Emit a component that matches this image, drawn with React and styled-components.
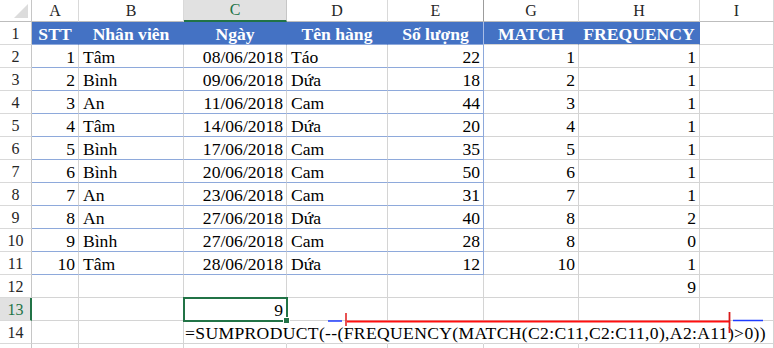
import React from "react";
import styled, { createGlobalStyle, css } from "styled-components";

const GlobalStyle = createGlobalStyle`
  html, body {
    margin: 0;
    padding: 0;
    background: #ffffff;
  }

  body {
    overflow: hidden;
  }
`;

const serif = `"Liberation Serif", "Times New Roman", "DejaVu Serif", serif`;

const columns = [
  { key: "A", width: 47 },
  { key: "B", width: 105 },
  { key: "C", width: 103 },
  { key: "D", width: 101 },
  { key: "E", width: 96 },
  { key: "G", width: 95 },
  { key: "H", width: 121 },
  { key: "I", width: 74 },
];

const headers = ["STT", "Nhân viên", "Ngày", "Tên hàng", "Số lượng", "MATCH", "FREQUENCY"];

const rows = [
  [1, "Tâm", "08/06/2018", "Táo", 22, 1, 1],
  [2, "Bình", "09/06/2018", "Dứa", 18, 2, 1],
  [3, "An", "11/06/2018", "Cam", 44, 3, 1],
  [4, "Tâm", "14/06/2018", "Dứa", 20, 4, 1],
  [5, "Bình", "17/06/2018", "Cam", 35, 5, 1],
  [6, "Bình", "20/06/2018", "Cam", 50, 6, 1],
  [7, "An", "23/06/2018", "Cam", 31, 7, 1],
  [8, "An", "27/06/2018", "Dứa", 40, 8, 2],
  [9, "Bình", "27/06/2018", "Cam", 28, 8, 0],
  [10, "Tâm", "28/06/2018", "Dứa", 12, 10, 1],
];

// column index -> alignment of the data in it
const alignFor = ["right", "left", "right", "left", "right", "right", "right", "left"];

const FORMULA = "=SUMPRODUCT(--(FREQUENCY(MATCH(C2:C11,C2:C11,0),A2:A11)>0))";

const Wrapper = styled.div`
  position: relative;
  width: 774px;
  height: 348px;
  overflow: hidden;
  font-family: ${serif};
`;

const Sheet = styled.div`
  display: grid;
  grid-template-columns: 32px ${columns.map((c) => `${c.width}px`).join(" ")};
  grid-template-rows: 22px repeat(15, 23px);
  font-family: ${serif};
`;

const Corner = styled.div`
  position: relative;
  box-sizing: border-box;
  border-right: 1px solid #c6c6c6;
  border-bottom: 1px solid #bdbdbd;

  &::after {
    content: "";
    position: absolute;
    right: 3px;
    bottom: 3px;
    width: 14px;
    height: 14px;
    background: #dcdcdc;
    clip-path: polygon(100% 0, 100% 100%, 0 100%);
  }
`;

const ColHead = styled.div`
  box-sizing: border-box;
  border-right: 1px solid ${({ $hidden }) => ($hidden ? "#9c9c9c" : "#d9d9d9")};
  border-bottom: 1px solid #bdbdbd;
  background: #ffffff;
  color: #262626;
  font-family: ${serif};
  font-size: 16px;
  line-height: 21px;
  text-align: center;

  ${({ $active }) =>
    $active &&
    css`
      background: #e1e1e1;
      color: #217346;
      border-right-color: #c6c6c6;
      border-bottom: 2px solid #217346;
      line-height: 20px;
    `}
`;

const RowHead = styled.div`
  box-sizing: border-box;
  border-right: 1px solid #c6c6c6;
  border-bottom: 1px solid #d9d9d9;
  background: #ffffff;
  color: #262626;
  font-family: ${serif};
  font-size: 16px;
  line-height: 23px;
  text-align: center;

  ${({ $active }) =>
    $active &&
    css`
      background: #e1e1e1;
      color: #217346;
      border-right: 2px solid #217346;
      padding-left: 1px;
    `}
`;

const Cell = styled.div`
  position: relative;
  box-sizing: border-box;
  border-right: 1px solid ${({ $edge }) => ($edge ? "#8ea9db" : "#d4d4d4")};
  border-bottom: 1px solid ${({ $band }) => ($band ? "#8ea9db" : "#d4d4d4")};
  padding: 1px 3px 0 4px;
  color: #000000;
  font-family: ${serif};
  font-size: 17.6px;
  line-height: 22px;
  white-space: nowrap;
  text-align: ${({ $align }) => $align || "left"};

  ${({ $head }) =>
    $head &&
    css`
      background: #4472c4;
      border-right-color: #4472c4;
      color: #ffffff;
      font-weight: bold;
      text-align: center;
      padding: 1px 0 0;
    `}

  ${({ $split }) =>
    $split &&
    css`
      border-right-color: #a9bde6;
    `}

  ${({ $spill }) =>
    $spill &&
    css`
      overflow: visible;
      z-index: 2;
      background: #ffffff;
      padding-left: 1px;
      letter-spacing: 0.34px;
    `}

  ${({ $covered }) =>
    $covered &&
    css`
      border-right-color: transparent;
    `}

  ${({ $selected }) =>
    $selected &&
    css`
      outline: 2px solid #217346;
      outline-offset: -1px;
      z-index: 3;

      &::after {
        content: "";
        position: absolute;
        right: -4px;
        bottom: -4px;
        width: 5px;
        height: 5px;
        background: #217346;
        border: 1px solid #ffffff;
      }
    `}
`;

const Marks = styled.svg`
  position: absolute;
  left: 0;
  top: 0;
  pointer-events: none;
  z-index: 4;
`;

function DataRow({ n, values }) {
  return (
    <>
      <RowHead>{n}</RowHead>
      {columns.map((c, i) => (
        <Cell
          key={c.key}
          $align={alignFor[i]}
          $band={i < 5}
          $edge={i === 4}
        >
          {values[i] !== undefined ? values[i] : ""}
        </Cell>
      ))}
    </>
  );
}

export default function App() {
  return (
    <Wrapper>
      <GlobalStyle />
      <Sheet>
        <Corner />
        {columns.map((c) => (
          <ColHead key={c.key} $active={c.key === "C"} $hidden={c.key === "E"}>
            {c.key}
          </ColHead>
        ))}

        <RowHead>1</RowHead>
        {columns.map((c, i) =>
          i < 7 ? (
            <Cell key={c.key} $head $band={i < 5} $split={i === 4}>
              {headers[i]}
            </Cell>
          ) : (
            <Cell key={c.key} />
          )
        )}

        {rows.map((r, idx) => (
          <DataRow key={idx} n={idx + 2} values={r} />
        ))}

        <RowHead>12</RowHead>
        {columns.map((c) => (
          <Cell key={c.key} $align="right">
            {c.key === "H" ? 9 : ""}
          </Cell>
        ))}

        <RowHead $active>13</RowHead>
        {columns.map((c) => (
          <Cell key={c.key} $align="right" $selected={c.key === "C"}>
            {c.key === "C" ? 9 : ""}
          </Cell>
        ))}

        <RowHead>14</RowHead>
        {columns.map((c, i) =>
          c.key === "C" ? (
            <Cell key={c.key} $spill $covered>
              {FORMULA}
            </Cell>
          ) : (
            <Cell key={c.key} $covered={i > 2 && i < 7} />
          )
        )}

        <RowHead />
        {columns.map((c) => (
          <Cell key={c.key} />
        ))}
      </Sheet>

      <Marks width="774" height="348" viewBox="0 0 774 348">
        <line x1="328" y1="321" x2="342" y2="321" stroke="#1f3cff" strokeWidth="1.5" />
        <line x1="347" y1="321.5" x2="730" y2="321.5" stroke="#ff1010" strokeWidth="2" />
        <line x1="346" y1="313" x2="346" y2="326" stroke="#e01818" strokeWidth="1.5" />
        <line x1="729.5" y1="312" x2="729.5" y2="333" stroke="#d81a1a" strokeWidth="1.8" />
        <line x1="733" y1="320.5" x2="763" y2="320.5" stroke="#1f3cff" strokeWidth="1.5" />
      </Marks>
    </Wrapper>
  );
}
